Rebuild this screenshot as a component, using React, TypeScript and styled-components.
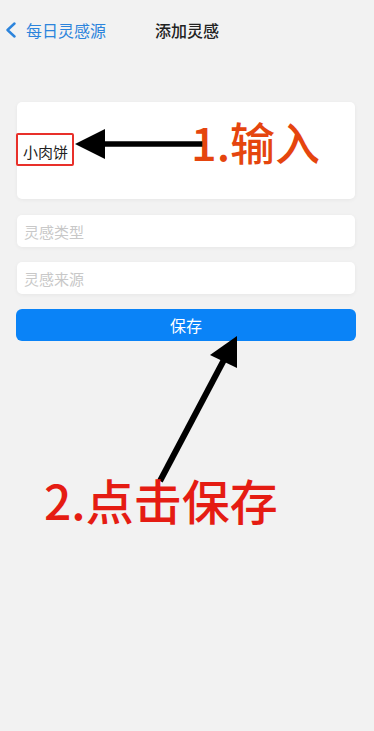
import styled, { createGlobalStyle } from "styled-components";

const GlobalStyle = createGlobalStyle`
  html, body {
    margin: 0;
    padding: 0;
    background: #f2f2f2;
  }
  body {
    font-family: "Noto Sans CJK SC", "Noto Sans", sans-serif;
  }
`;

const Screen = styled.div`
  position: relative;
  width: 374px;
  height: 731px;
  overflow: hidden;
  background: #f2f2f2;
`;

const NavBar = styled.header`
  position: relative;
  height: 60px;
  display: flex;
  align-items: center;
  padding-left: 5px;
`;

const BackButton = styled.button`
  display: flex;
  align-items: center;
  gap: 9px;
  border: 0;
  background: none;
  padding: 0;
  color: #2c84dc;
  font-family: inherit;
  font-size: 16px;
  line-height: 1;
`;

const NavTitle = styled.h1`
  position: absolute;
  left: 0;
  right: 0;
  top: 0;
  height: 60px;
  margin: 0;
  display: flex;
  align-items: center;
  justify-content: center;
  font-size: 16px;
  font-weight: 500;
  color: #222;
  pointer-events: none;
`;

const Form = styled.form`
  display: flex;
  flex-direction: column;
  gap: 15px;
  margin-top: 42px;
  padding: 0 19px 0 17px;
`;

const Card = styled.div`
  height: 97px;
  margin-bottom: 1px;
  background: #fff;
  border-radius: 5px;
  box-shadow: 0 1px 4px rgba(0, 0, 0, 0.05);
  display: flex;
  align-items: center;
  padding: 0 6px;
  box-sizing: border-box;
`;

const Value = styled.span`
  font-size: 15px;
  color: #222;
  margin-top: 1px;
`;

const Field = styled.div`
  height: 32px;
  background: #fff;
  border-radius: 5px;
  box-shadow: 0 1px 4px rgba(0, 0, 0, 0.05);
  display: flex;
  align-items: center;
  padding: 0 7px;
  font-size: 15px;
  color: #c8c8c8;
`;

const SaveButton = styled.button`
  height: 32px;
  margin: 0 -1px;
  border: 0;
  border-radius: 6px;
  background: #0a83f7;
  color: #fff;
  font-family: inherit;
  font-size: 16px;
`;

const Highlight = styled.div`
  position: absolute;
  left: 16px;
  top: 133px;
  width: 58px;
  height: 33px;
  box-sizing: border-box;
  border: 2px solid #e8302a;
  border-radius: 2px;
`;

const Arrows = styled.svg`
  position: absolute;
  left: 0;
  top: 0;
  pointer-events: none;
`;

const Label = styled.div<{ $x: number; $y: number; $color: string; $size: number }>`
  position: absolute;
  left: ${(p) => p.$x}px;
  top: ${(p) => p.$y}px;
  font-size: ${(p) => p.$size}px;
  font-weight: 500;
  line-height: 1;
  color: ${(p) => p.$color};
  white-space: nowrap;
`;

export default function App() {
  return (
    <Screen>
      <GlobalStyle />
      <NavBar>
        <BackButton type="button">
          <svg width="12" height="16" viewBox="0 0 12 16">
            <path d="M9.5 1.5 L2.5 8 L9.5 14.5" fill="none" stroke="#2c84dc" strokeWidth="2.4" strokeLinecap="round" strokeLinejoin="round" />
          </svg>
          每日灵感源
        </BackButton>
        <NavTitle>添加灵感</NavTitle>
      </NavBar>
      <Form onSubmit={(e) => e.preventDefault()}>
        <Card>
          <Value>小肉饼</Value>
        </Card>
        <Field>灵感类型</Field>
        <Field>灵感来源</Field>
        <SaveButton type="submit">保存</SaveButton>
      </Form>

      <Highlight />
      <Arrows width="374" height="731" viewBox="0 0 374 731">
        <line x1="100" y1="144" x2="207" y2="144" stroke="#000" strokeWidth="5.5" />
        <polygon points="75,144 105,129 105,159" fill="#000" />
        <line x1="160" y1="481" x2="226" y2="356" stroke="#000" strokeWidth="6" />
        <polygon points="237,336 210,355 237,368" fill="#000" />
      </Arrows>
      <Label $x={191} $y={119} $color="#e5450e" $size={45}>1.输入</Label>
      <Label $x={44} $y={475} $color="#e51c13" $size={48}>2.点击保存</Label>
    </Screen>
  );
}
